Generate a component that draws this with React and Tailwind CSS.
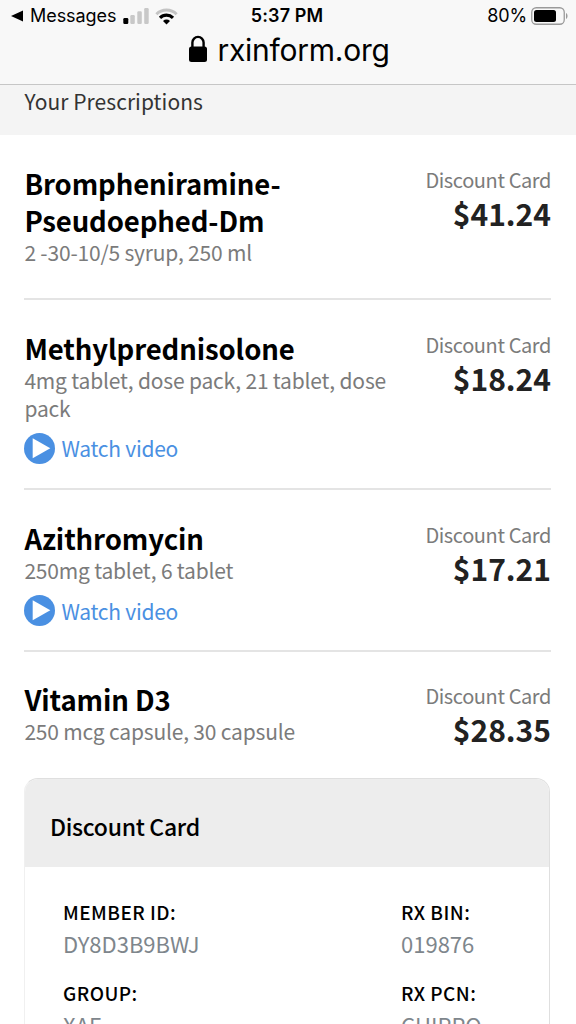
import React from "react";

const prescriptions = [
  {
    name: "Brompheniramine-Pseudoephed-Dm",
    detail: "2 -30-10/5 syrup, 250 ml",
    price: "$41.24",
    size: "h-[165px] pt-[30px]",
  },
  {
    name: "Methylprednisolone",
    detail: "4mg tablet, dose pack, 21 tablet, dose pack",
    price: "$18.24",
    video: true,
    size: "h-[190px] pt-[30px]",
  },
  {
    name: "Azithromycin",
    detail: "250mg tablet, 6 tablet",
    price: "$17.21",
    video: true,
    size: "h-[162px] pt-[30px]",
  },
  {
    name: "Vitamin D3",
    detail: "250 mcg capsule, 30 capsule",
    price: "$28.35",
    size: "h-[126px] pt-[29px]",
  },
];

const cardFields = [
  { label: "MEMBER ID:", value: "DY8D3B9BWJ" },
  { label: "RX BIN:", value: "019876" },
  { label: "GROUP:", value: "XAE" },
  { label: "RX PCN:", value: "CHIPPO" },
];

function StatusBar() {
  return (
    <div className="grid h-8 grid-cols-3 items-center pr-2 pl-2.5 font-['Inter',sans-serif] text-[18px] leading-8 text-black">
      <div className="flex items-center whitespace-nowrap">
        <svg className="shrink-0" width="14" height="12" viewBox="0 0 14 12">
          <path d="M1 6 13 0.5v11z" />
        </svg>
        <span className="ml-1.5 tracking-[-0.05px]">Messages</span>
        <svg className="ml-1.5 shrink-0" width="26" height="16" viewBox="0 0 26 16">
          <rect x="0.3" y="10" width="5" height="6" rx="1.2" />
          <rect x="7.3" y="7" width="4.5" height="9" rx="1.2" fill="#c8c8c8" />
          <rect x="14.3" y="3.2" width="4.5" height="12.8" rx="1.2" fill="#c8c8c8" />
          <rect x="21.2" y="0" width="4.5" height="16" rx="1.2" fill="#c8c8c8" />
        </svg>
        <svg className="ml-1.5 shrink-0" width="23" height="17" viewBox="0 0 23 17" fill="none">
          <path d="M1.4 6.2a14.4 14.4 0 0 1 20.2 0" stroke="#c4c4c4" strokeWidth="3" />
          <path d="M5 9.8a9.3 9.3 0 0 1 13 0" stroke="#000" strokeWidth="3.2" />
          <path d="M11.5 16.5 8 13a5.1 5.1 0 0 1 7 0z" fill="#000" />
        </svg>
      </div>
      <div className="text-center font-semibold tracking-[0.1px]">
        <span className="mr-1">5:37 PM</span>
      </div>
      <div className="flex items-center justify-end">
        <span className="tracking-[-0.1px]">80%</span>
        <svg className="ml-1" width="37" height="18" viewBox="0 0 37 18">
          <rect x="0.75" y="0.75" width="32.5" height="16.5" rx="4.5" fill="none" stroke="#9a9a9a" strokeWidth="1.3" />
          <rect x="3" y="3" width="22" height="12" rx="2.5" />
          <path d="M35 6v6c2-1 2-5 0-6z" fill="#9a9a9a" />
        </svg>
      </div>
    </div>
  );
}

function Prescription({ name, detail, price, video, size }) {
  return (
    <li className={`flex justify-between ${size} border-b-2 border-[#e4e4e4] last:border-0`}>
      <div className="w-[370px]">
        <h2 className="w-[280px] text-[27.5px] leading-[37px] font-bold tracking-[-0.1px] text-black">{name}</h2>
        <p className="text-[21px] leading-[27.5px] tracking-[-0.19px] text-[#7b7b7b]">{detail}</p>
        {video && (
          <a className="mt-2.5 flex items-center text-[21px] leading-8 tracking-[-0.25px] text-[#4a90e2]">
            <svg className="mr-1.5" width="31" height="31" viewBox="0 0 31 31">
              <circle cx="15.5" cy="15.5" r="15.5" fill="#4a90e2" />
              <path d="M8.7 5.3v20L26.3 15.2z" fill="#fff" />
            </svg>
            Watch video
          </a>
        )}
      </div>
      <div className="text-right whitespace-nowrap">
        <div className="text-[20px] leading-[30px] tracking-[-0.4px] text-[#7b7b7b]">Discount Card</div>
        <div className="text-[30px] leading-[37px] font-bold text-[#222]">{price}</div>
      </div>
    </li>
  );
}

export default function App() {
  return (
    <div className="h-screen overflow-hidden bg-white font-['Noto_Sans_CJK_SC',sans-serif]">
      <header className="h-[85px] border-b border-[#c6c6c6] bg-[#f8f8f8]">
        <StatusBar />
        <div className="flex items-center justify-center pl-[3px]">
          <svg className="mr-2.5 -mt-1" width="18" height="27" viewBox="0 0 18 27">
            <path d="M3.4 13V7.5a5.6 5.6 0 0 1 11.2 0V13" fill="none" stroke="#000" strokeWidth="2.4" />
            <rect x="0" y="11.5" width="18" height="15.5" rx="2.5" />
          </svg>
          <span className="font-['Inter',sans-serif] text-[30px] leading-9 tracking-[-0.25px]">rxinform.org</span>
        </div>
      </header>
      <div className="h-[50px] bg-[#f4f4f4] px-[24.5px] text-[21px] leading-[33px] tracking-[0.05px] text-[#333]">
        Your Prescriptions
      </div>
      <ul className="pr-[25px] pl-[24.4px]">
        {prescriptions.map((item) => (
          <Prescription key={item.name} {...item} />
        ))}
      </ul>
      <section className="mr-[26px] ml-6 h-[300px] overflow-hidden rounded-t-[14px] border border-[#dfdfdf] border-l-[#f0f0f0]">
        <h2 className="h-[88px] bg-[#ededed] px-[25px] text-[23px] leading-[94px] font-medium tracking-[-0.3px] text-black">
          Discount Card
        </h2>
        <dl className="grid grid-cols-[338px_1fr] gap-y-[19px] px-[38px] pt-[30px]">
          {cardFields.map(({ label, value }) => (
            <div key={label}>
              <dt className="text-[19px] leading-[30px] font-medium tracking-[0.45px] text-black">{label}</dt>
              <dd className="text-[22px] leading-8 text-[#7e868c]">{value}</dd>
            </div>
          ))}
        </dl>
      </section>
    </div>
  );
}
